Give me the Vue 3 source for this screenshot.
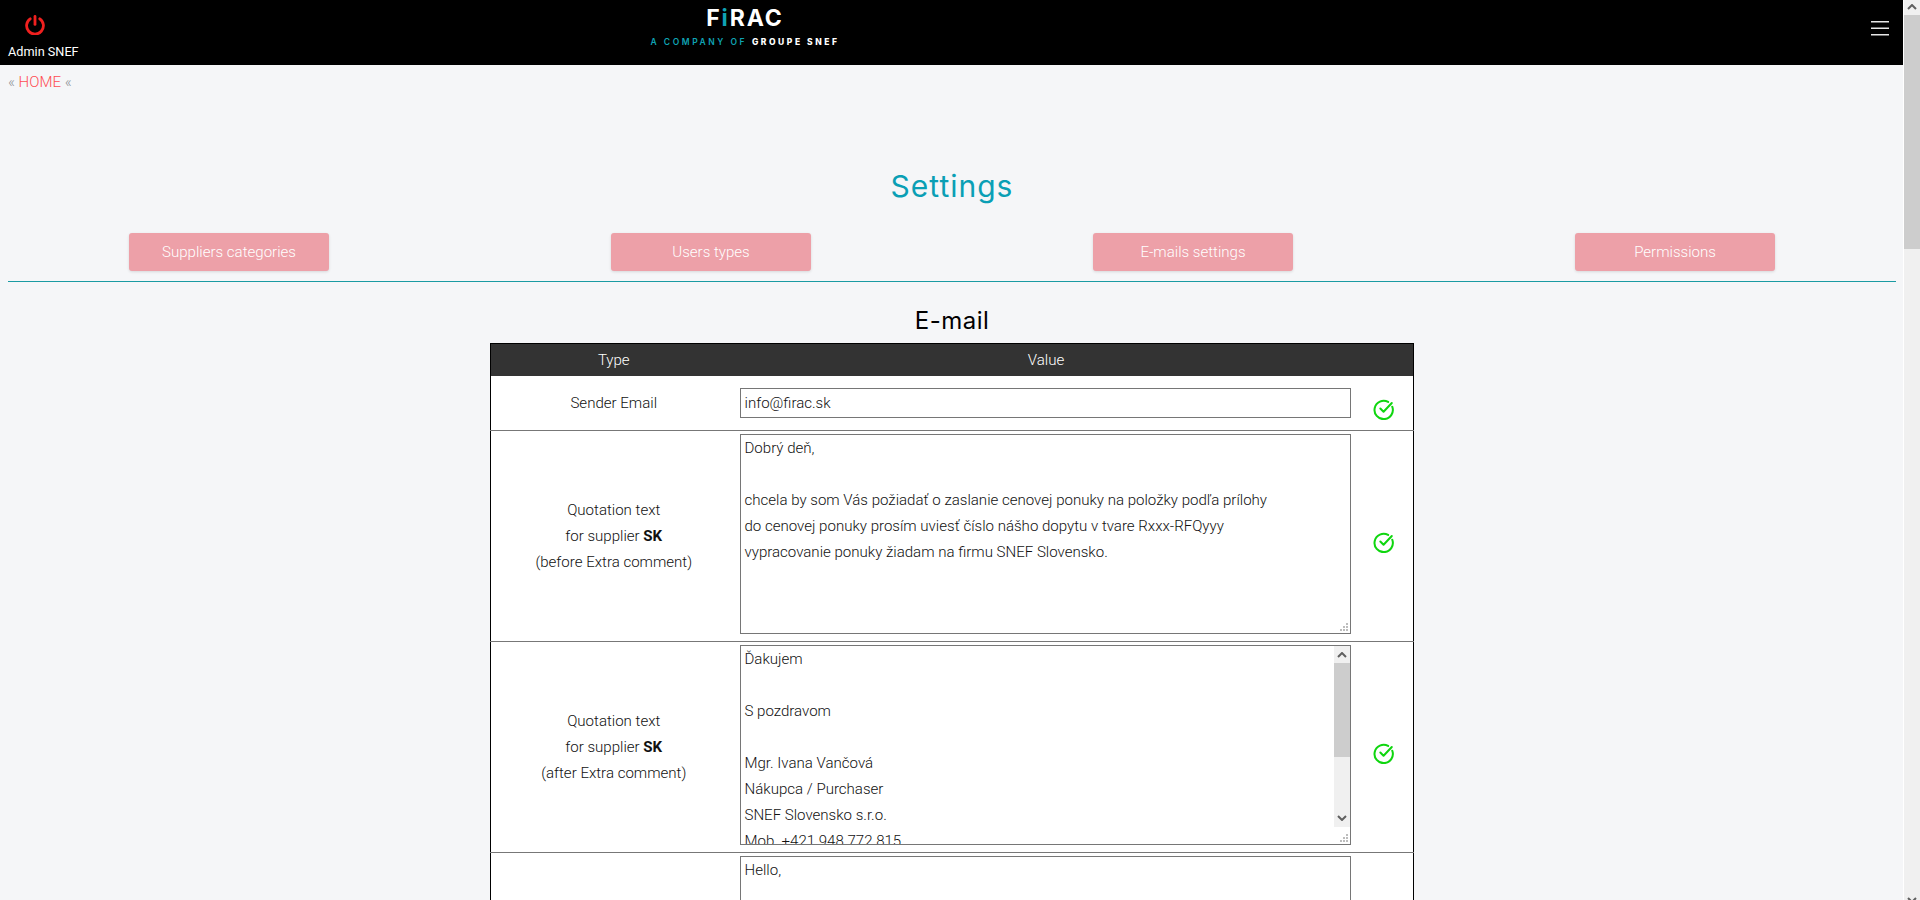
<script setup>
const buttons = ['Suppliers categories', 'Users types', 'E-mails settings', 'Permissions']
const rows = [
  {
    lines: ['Quotation text', 'for supplier ', '(before Extra comment)'], code: 'SK', bar: false,
    value: 'Dobrý deň,\n\nchcela by som Vás požiadať o zaslanie cenovej ponuky na položky podľa prílohy\ndo cenovej ponuky prosím uviesť číslo nášho dopytu v tvare Rxxx-RFQyyy\nvypracovanie ponuky žiadam na firmu SNEF Slovensko.'
  },
  {
    lines: ['Quotation text', 'for supplier ', '(after Extra comment)'], code: 'SK', bar: true,
    value: 'Ďakujem\n\nS pozdravom\n\nMgr. Ivana Vančová\nNákupca / Purchaser\nSNEF Slovensko s.r.o.\nMob. +421 948 772 815\nE-mail: info@firac.sk\nwww.firac.sk\n\n\n'
  },
  {
    lines: ['Quotation text', 'for supplier ', '(before Extra comment)'], code: 'EN', bar: false,
    value: 'Hello,\n\nplease send us a quotation for the items listed in the attachment.'
  }
]
</script>

<template>
  <div class="page">
    <header class="topbar">
      <div class="user">
        <svg class="power" viewBox="0 0 20 20" width="20" height="20" fill="none" stroke="#f0201f" stroke-width="2.8" stroke-linecap="round">
          <path d="M5.2 3.8a8.4 8.4 0 1 0 9.6 0" />
          <path d="M10 1.4v8" />
        </svg>
        <span class="user-name">Admin SNEF</span>
      </div>
      <div class="logo">
        <div class="logo-main">F<span class="teal">i</span>RAC</div>
        <div class="logo-sub"><span class="teal">A COMPANY OF</span> <b>GROUPE SNEF</b></div>
      </div>
      <button class="burger" aria-label="Menu">
        <svg viewBox="0 0 18 16" width="18" height="16" fill="none" stroke="#e6e6e6" stroke-width="1.4">
          <path d="M0 1.7h18M0 8.3h18M0 14.7h18" />
        </svg>
      </button>
    </header>

    <main class="content">
      <div class="crumb">« <a>HOME</a> «</div>
      <h1>Settings</h1>
      <nav class="tabs">
        <button v-for="b in buttons" :key="b" class="tab">{{ b }}</button>
      </nav>
      <hr />
      <h2>E-mail</h2>
      <table>
        <colgroup>
          <col class="c1" /><col class="c2" /><col class="c3" />
        </colgroup>
        <thead>
          <tr><th>Type</th><th>Value</th><th></th></tr>
        </thead>
        <tbody>
          <tr>
            <td>Sender Email</td>
            <td class="field single"><input type="text" value="info@firac.sk" /></td>
            <td class="ok">
              <svg viewBox="0 0 24 24" width="22" height="22" fill="none" stroke="#0fd60f" stroke-width="2.2" stroke-linecap="round" stroke-linejoin="round">
                <path d="M21 9.5A10 10 0 1 1 16.5 4.3" /><path d="M8 11.5l3.5 3.5L20.5 5.5" />
              </svg>
            </td>
          </tr>
          <tr v-for="(r, i) in rows" :key="i">
            <td>
              <div v-for="(l, j) in r.lines" :key="j">{{ l }}<b v-if="j === 1">{{ r.code }}</b></div>
            </td>
            <td class="field">
              <div class="ta-wrap">
                <textarea :value="r.value"></textarea>
                <div v-if="r.bar" class="ta-bar">
                  <svg class="arrow" viewBox="0 0 10 6" width="10" height="6"><path d="M1 5l4-4 4 4" /></svg>
                  <div class="ta-thumb"></div>
                  <svg class="arrow down" viewBox="0 0 10 6" width="10" height="6"><path d="M1 1l4 4 4-4" /></svg>
                </div>
                <svg class="grip" viewBox="0 0 8 8" width="8" height="8">
                  <rect x="6" y="0" width="2" height="2" /><rect x="3" y="3" width="2" height="2" /><rect x="6" y="3" width="2" height="2" />
                  <rect x="0" y="6" width="2" height="2" /><rect x="3" y="6" width="2" height="2" /><rect x="6" y="6" width="2" height="2" />
                </svg>
              </div>
            </td>
            <td class="ok">
              <svg viewBox="0 0 24 24" width="22" height="22" fill="none" stroke="#0fd60f" stroke-width="2.2" stroke-linecap="round" stroke-linejoin="round">
                <path d="M21 9.5A10 10 0 1 1 16.5 4.3" /><path d="M8 11.5l3.5 3.5L20.5 5.5" />
              </svg>
            </td>
          </tr>
        </tbody>
      </table>
    </main>

    <aside class="page-bar">
      <svg class="arrow" viewBox="0 0 10 6" width="10" height="6"><path d="M1 5l4-4 4 4" /></svg>
      <div class="page-thumb"></div>
      <svg class="arrow page-down" viewBox="0 0 10 6" width="10" height="6"><path d="M1 1l4 4 4-4" /></svg>
    </aside>
  </div>
</template>

<style>
body { margin: 0; background: #f5f6f8; }
</style>

<style scoped>
.page {
  font-family: Roboto, "Liberation Sans", sans-serif;
  font-weight: 300;
  font-size: 15.05px;
  color: #111;
  width: 1903px;
  min-height: 3346px;
}
.topbar {
  height: 65px;
  background: #000;
  display: flex;
  align-items: flex-start;
  color: #fff;
}
.user {
  width: 72px;
  margin-left: 8px;
  display: flex;
  flex-direction: column;
  align-items: flex-start;
  padding-top: 15px;
}
.power {
  display: block;
  margin-left: 17px;
}
.user-name {
  font-size: 12.7px;
  font-weight: 400;
  line-height: 16px;
  margin-top: 9px;
  white-space: nowrap;
}
.logo {
  width: 200px;
  margin-left: 565px;
  text-align: center;
  font-family: Inter, sans-serif;
  color: #fff;
  padding-top: 6px;
}
.logo-main {
  font-size: 23px;
  line-height: 25px;
  font-weight: 700;
  letter-spacing: 1.9px;
}
.logo-sub {
  font-size: 8.5px;
  line-height: 12px;
  margin-top: 5px;
  letter-spacing: 2.55px;
  font-weight: 600;
  white-space: nowrap;
}
.logo-sub b { font-weight: 800; }
.teal { color: #0fa3b4; }
.burger {
  margin-left: auto;
  margin-right: 14px;
  margin-top: 20px;
  padding: 0;
  border: 0;
  background: none;
  line-height: 0;
}
.content { padding: 0 7px 0 8px; }
.crumb {
  line-height: 20px;
  padding-top: 7px;
  color: #8a8f94;
}
.crumb a { color: #ff4d52; }
h1 {
  margin: 75px 0 0;
  text-align: center;
  font-family: Inter, sans-serif;
  font-weight: 400;
  font-size: 30px;
  line-height: 38px;
  color: #0a9fb5;
  letter-spacing: 1px;
}
.tabs {
  display: flex;
  justify-content: space-between;
  padding: 0 121px;
  margin-top: 28px;
}
.tab {
  width: 200px;
  height: 38px;
  border: 0;
  border-radius: 3px;
  background: #eda0a8;
  color: #fff;
  font: 300 15.05px Roboto, sans-serif;
  box-shadow: 0 1px 3px rgba(0, 0, 0, 0.12);
  padding: 0;
}
hr {
  border: 0;
  height: 1px;
  background: #1a9ba3;
  margin: 10px 0 0;
}
h2 {
  margin: 24px 0 0;
  text-align: center;
  font-family: Inter, sans-serif;
  font-size: 24px;
  line-height: 30px;
  font-weight: 400;
  color: #000;
  letter-spacing: 0.5px;
}
table {
  width: 924px;
  margin: 7px auto 0;
  border-collapse: collapse;
  table-layout: fixed;
  background: #fff;
  border: 1px solid #000;
}
.c1 { width: 244px; }
.c2 { width: 621px; }
th {
  background: #333;
  color: #fff;
  font-weight: 300;
  font-size: 15.05px;
  height: 32px;
  padding: 0 0 0 2px;
}
td {
  text-align: center;
  line-height: 26px;
  padding: 0;
  border-top: 1px solid #777;
  vertical-align: middle;
}
td:first-child { padding-left: 2px; }
td b { font-weight: 700; }
tbody tr:first-child td { border-top: 0; }
td.field {
  padding: 3px 5px 7px;
  line-height: 0;
}
td.field.single { padding: 12px 5px; }
.ta-wrap {
  position: relative;
  width: 611px;
  height: 200px;
}
input, textarea {
  display: block;
  box-sizing: border-box;
  width: 611px;
  border: 1px solid #767676;
  background: #fff;
  color: #111;
  font: 300 15.05px/26px Roboto, sans-serif;
  padding: 0 4px;
  margin: 0;
  outline: 0;
}
input { height: 30px; }
textarea {
  height: 200px;
  resize: none;
  overflow: hidden;
}
.ta-bar {
  position: absolute;
  top: 1px;
  right: 1px;
  width: 16px;
  height: 181px;
  background: #f0f0f0;
}
.ta-thumb {
  position: absolute;
  top: 17px;
  left: 0;
  width: 16px;
  height: 94px;
  background: #cdcdcd;
}
.arrow {
  position: absolute;
  top: 6px;
  left: 3px;
  fill: none;
  stroke: #606060;
  stroke-width: 2;
}
.arrow.down { top: auto; bottom: 6px; }
.grip {
  position: absolute;
  right: 3px;
  bottom: 3px;
  fill: #bdbdbd;
}
td.ok { padding-top: 11px; }
td.ok svg { display: block; margin: 0 auto; }
.page-bar {
  position: fixed;
  top: 0;
  right: 0;
  width: 16px;
  height: 900px;
  background: #f0f0f0;
  border-left: 1px solid #fff;
}
.page-thumb {
  position: absolute;
  top: 15px;
  left: 0;
  width: 16px;
  height: 234px;
  background: #cdcdcd;
}
.page-bar .arrow { top: 4px; }
.page-bar .page-down { top: 897px; }
</style>
